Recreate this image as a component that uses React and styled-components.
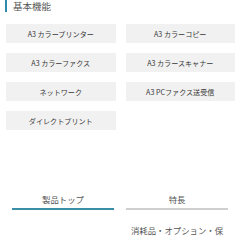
import React from "react";
import styled, { createGlobalStyle } from "styled-components";

const GlobalStyle = createGlobalStyle`
  body {
    margin: 0;
    background: #fff;
    font-family: "Noto Sans CJK JP", "Noto Sans", sans-serif;
  }
`;

const Page = styled.div`
  width: 240px;
  height: 240px;
  overflow: hidden;
`;

const Section = styled.section`
  padding: 0 5px 0 6px;
`;

const Title = styled.h2`
  margin: 0 0 0 -1px;
  height: 12px;
  line-height: 12px;
  padding-left: 6px;
  border-left: 2.5px solid #2f8bab;
  font-size: 9.5px;
  font-weight: normal;
  color: #555;
`;

const Grid = styled.div`
  display: grid;
  grid-template-columns: 1fr 1fr;
  column-gap: 10px;
  row-gap: 10px;
  margin-top: 12px;
`;

const Feature = styled.div`
  height: 19px;
  display: flex;
  align-items: center;
  justify-content: center;
  background: #f1f1f1;
  color: #383838;
  font-size: 7.1px;
`;

const Tabs = styled.nav`
  display: grid;
  grid-template-columns: 1fr 1fr;
  column-gap: 12px;
  row-gap: 12px;
  margin: 63px 12px 0;
`;

const Tab = styled.a`
  grid-column: ${(p) => p.col || "auto"};
  display: block;
  padding: 0 4px ${(p) => (p.plain ? "0" : "3px")};
  text-align: center;
  font-size: 8.4px;
  line-height: ${(p) => (p.plain ? "16px" : "12px")};
  color: #555;
  text-decoration: none;
  border-bottom: ${(p) =>
    p.plain ? "none" : p.active ? "2px solid #3a8fa6" : "2px solid #cfcfcf"};
`;

const features = [
  "A3 カラープリンター",
  "A3 カラーコピー",
  "A3 カラーファクス",
  "A3 カラースキャナー",
  "ネットワーク",
  "A3 PCファクス送受信",
  "ダイレクトプリント",
];

export default function App() {
  return (
    <Page>
      <GlobalStyle />
      <Section>
        <Title>基本機能</Title>
        <Grid>
          {features.map((f) => (
            <Feature key={f}>{f}</Feature>
          ))}
        </Grid>
      </Section>
      <Tabs>
        <Tab active>製品トップ</Tab>
        <Tab>特長</Tab>
        <Tab col={2} plain>
          消耗品・オプション・保守サービス
        </Tab>
      </Tabs>
    </Page>
  );
}
